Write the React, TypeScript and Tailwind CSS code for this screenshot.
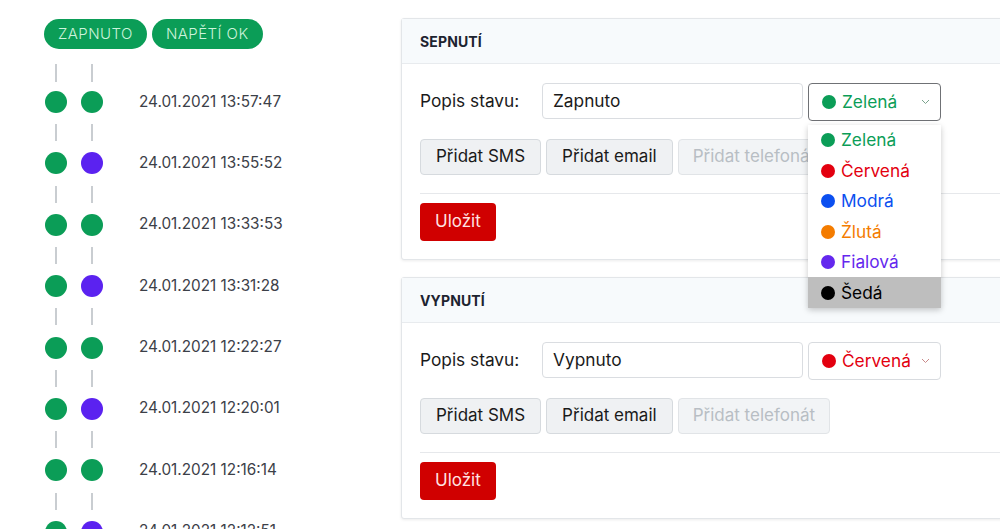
import React from "react";

const rows: { t: string; p: boolean }[] = [
  { t: "24.01.2021 13:57:47", p: false },
  { t: "24.01.2021 13:55:52", p: true },
  { t: "24.01.2021 13:33:53", p: false },
  { t: "24.01.2021 13:31:28", p: true },
  { t: "24.01.2021 12:22:27", p: false },
  { t: "24.01.2021 12:20:01", p: true },
  { t: "24.01.2021 12:16:14", p: false },
  { t: "24.01.2021 12:12:51", p: true },
];

const options = [
  { name: "Zelená", dot: "bg-[#0b9d57]", text: "text-[#0b9d57]" },
  { name: "Červená", dot: "bg-[#e3000f]", text: "text-[#e3000f]" },
  { name: "Modrá", dot: "bg-[#0b4ff0]", text: "text-[#0b4ff0]" },
  { name: "Žlutá", dot: "bg-[#f47c00]", text: "text-[#f47c00]" },
  { name: "Fialová", dot: "bg-[#6428ee]", text: "text-[#6428ee]" },
  { name: "Šedá", dot: "bg-black", text: "text-black" },
];

function Dash() {
  return (
    <div className="flex h-[39.4px] items-center gap-[14px] pl-[10px]">
      <div className="flex w-[22px] justify-center">
        <div className="h-[17px] w-[2px] bg-[#c9cdd1]" />
      </div>
      <div className="flex w-[22px] justify-center">
        <div className="h-[17px] w-[2px] bg-[#c9cdd1]" />
      </div>
    </div>
  );
}

function Chevron({ color }: { color: string }) {
  return (
    <svg width="9" height="6" viewBox="0 0 9 6" fill="none">
      <path d="M1 1l3.5 3.5L8 1" stroke={color} strokeWidth="1" />
    </svg>
  );
}

function Card({
  title,
  value,
  color,
  open,
}: {
  title: string;
  value: string;
  color: number;
  open: boolean;
}) {
  const sel = options[color];
  return (
    <div className="w-[640px] rounded-[3px] border border-[#e3e6e9] bg-white shadow-[0_1px_3px_rgba(0,0,0,0.08)]">
      <div className="flex h-[45px] items-center border-b border-[#e8ebee] bg-[#f7fafc] pl-[18px] text-[14px] font-bold tracking-[0.01em] text-[#1d2330]">
        {title}
      </div>
      <div className="px-[18px] pt-[18px]">
        <div className="flex h-[38px] items-center">
          <div className="w-[122px] text-[17.3px] text-[#1a1a1a]">Popis stavu:</div>
          <div className="flex h-[36px] w-[261px] items-center rounded-[4px] border border-[#dadde1] px-[10px] text-[17.3px] text-[#1a1a1a]">
            {value}
          </div>
          <div className="relative ml-[5px] pt-[1px]">
            <div
              className={
                open
                  ? "flex h-[38px] w-[133px] items-center rounded-[4px] border border-[#6f7175] pl-[13px] pr-[10px]"
                  : "flex h-[38px] w-[133px] items-center rounded-[4px] border border-[#d8dbdf] pl-[13px] pr-[10px]"
              }
            >
              <span className={`h-[14px] w-[14px] rounded-full ${sel.dot}`} />
              <span className={`ml-[6px] flex-1 text-[17.3px] ${sel.text}`}>{sel.name}</span>
              <Chevron color={open ? "#7aa38c" : "#c98a8a"} />
            </div>
            {open && (
              <div className="absolute left-0 top-[43px] z-20 w-[133px] bg-white shadow-[0_2px_6px_rgba(0,0,0,0.22)]">
                {options.map((o, i) => (
                  <div
                    key={o.name}
                    className={
                      i === 5
                        ? "flex h-[30.5px] items-center bg-[#bebebe] pl-[13px] pt-[1px]"
                        : "flex h-[30.5px] items-center pl-[13px] pt-[1px]"
                    }
                  >
                    <span className={`h-[14px] w-[14px] rounded-full ${o.dot}`} />
                    <span className={`ml-[6px] text-[17.3px] ${o.text}`}>{o.name}</span>
                  </div>
                ))}
              </div>
            )}
          </div>
        </div>
        <div className="mt-[19px] flex gap-[5px]">
          <button className="h-[36px] rounded-[4px] border border-[#d6dade] bg-[#eff1f3] px-[15px] text-[17px] text-[#1a1a1a]">
            Přidat SMS
          </button>
          <button className="h-[36px] rounded-[4px] border border-[#d6dade] bg-[#eff1f3] px-[15px] text-[17px] text-[#1a1a1a]">
            Přidat email
          </button>
          <button className="h-[36px] rounded-[4px] border border-[#e1e4e7] bg-[#f2f4f6] px-[14px] text-[17px] text-[#b8bec4]">
            Přidat telefonát
          </button>
        </div>
        <div className="mt-[18px] border-t border-[#e6e8eb] pb-[18px] pt-[9px]">
          <button className="h-[38px] rounded-[4px] bg-[#d00000] px-[15px] text-[17px] text-[#ffe3e3]">
            Uložit
          </button>
        </div>
      </div>
    </div>
  );
}

export default function App() {
  return (
    <div
      className="relative flex h-[529px] w-[1000px] overflow-hidden bg-white"
      style={{ fontFamily: "Inter, 'Noto Sans', sans-serif" }}
    >
      <div className="w-[401px] shrink-0 pl-[35px] pt-[19px]">
        <div className="flex gap-[5px] pl-[9px]">
          <span className="flex h-[30px] items-center rounded-full bg-[#0b9d57] px-[14px] text-[15px] font-light tracking-[0.03em] text-[#cdf3dc]">
            ZAPNUTO
          </span>
          <span className="flex h-[30px] items-center rounded-full bg-[#0b9d57] px-[14px] text-[15px] font-light tracking-[0.03em] text-[#cdf3dc]">
            NAPĚTÍ OK
          </span>
        </div>
        <div className="mt-[2px] h-[40px] pt-[11px]">
          <div className="flex gap-[14px] pl-[10px] pt-[2px]">
            <div className="flex w-[22px] justify-center">
              <div className="h-[18px] w-[2px] bg-[#c9cdd1]" />
            </div>
            <div className="flex w-[22px] justify-center">
              <div className="h-[18px] w-[2px] bg-[#c9cdd1]" />
            </div>
          </div>
        </div>
        {rows.map((r, i) => (
          <div key={r.t}>
            {i > 0 && <Dash />}
            <div className="flex h-[22px] items-center gap-[14px] pl-[10px]">
              <span className="h-[22px] w-[22px] rounded-full bg-[#0b9d57]" />
              <span
                className={
                  r.p
                    ? "h-[22px] w-[22px] rounded-full bg-[#5b22f0]"
                    : "h-[22px] w-[22px] rounded-full bg-[#0b9d57]"
                }
              />
              <span className="ml-[22px] text-[15.3px] text-[#3c4048]">{r.t}</span>
            </div>
          </div>
        ))}
      </div>
      <div className="flex flex-col gap-[17px] pt-[18px]">
        <Card title="SEPNUTÍ" value="Zapnuto" color={0} open={true} />
        <Card title="VYPNUTÍ" value="Vypnuto" color={1} open={false} />
      </div>
    </div>
  );
}
